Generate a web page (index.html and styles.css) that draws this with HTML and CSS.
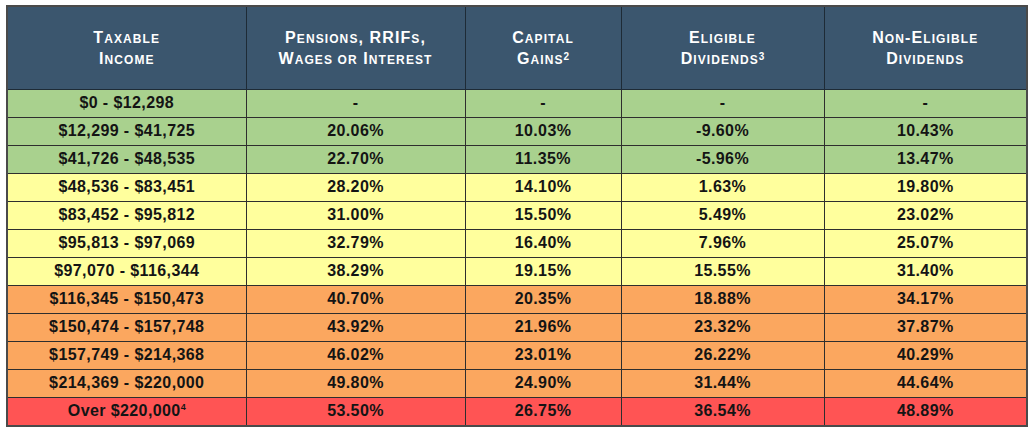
FILE: index.html
```html
<!DOCTYPE html>
<html>
<head>
<meta charset="utf-8">
<link rel="stylesheet" href="styles.css">
</head>
<body>
<table class="rates">
  <colgroup>
    <col class="c1"><col class="c2"><col class="c3"><col class="c4"><col class="c5">
  </colgroup>
  <thead>
    <tr>
      <th>T<span class="sc">axable</span><br>I<span class="sc">ncome</span></th>
      <th>P<span class="sc">ensions</span>, RRIF<span class="sc">s</span>,<br>W<span class="sc">ages or</span> I<span class="sc">nterest</span></th>
      <th>C<span class="sc">apital</span><br>G<span class="sc">ains</span><sup>2</sup></th>
      <th>E<span class="sc">ligible</span><br>D<span class="sc">ividends</span><sup>3</sup></th>
      <th>N<span class="sc">on</span>-E<span class="sc">ligible</span><br>D<span class="sc">ividends</span></th>
    </tr>
  </thead>
  <tbody>
    <tr class="green"><td>$0 - $12,298</td><td>-</td><td>-</td><td>-</td><td>-</td></tr>
    <tr class="green"><td>$12,299 - $41,725</td><td>20.06%</td><td>10.03%</td><td>-9.60%</td><td>10.43%</td></tr>
    <tr class="green"><td>$41,726 - $48,535</td><td>22.70%</td><td>11.35%</td><td>-5.96%</td><td>13.47%</td></tr>
    <tr class="yellow"><td>$48,536 - $83,451</td><td>28.20%</td><td>14.10%</td><td>1.63%</td><td>19.80%</td></tr>
    <tr class="yellow"><td>$83,452 - $95,812</td><td>31.00%</td><td>15.50%</td><td>5.49%</td><td>23.02%</td></tr>
    <tr class="yellow"><td>$95,813 - $97,069</td><td>32.79%</td><td>16.40%</td><td>7.96%</td><td>25.07%</td></tr>
    <tr class="yellow"><td>$97,070 - $116,344</td><td>38.29%</td><td>19.15%</td><td>15.55%</td><td>31.40%</td></tr>
    <tr class="orange"><td>$116,345 - $150,473</td><td>40.70%</td><td>20.35%</td><td>18.88%</td><td>34.17%</td></tr>
    <tr class="orange"><td>$150,474 - $157,748</td><td>43.92%</td><td>21.96%</td><td>23.32%</td><td>37.87%</td></tr>
    <tr class="orange"><td>$157,749 - $214,368</td><td>46.02%</td><td>23.01%</td><td>26.22%</td><td>40.29%</td></tr>
    <tr class="orange"><td>$214,369 - $220,000</td><td>49.80%</td><td>24.90%</td><td>31.44%</td><td>44.64%</td></tr>
    <tr class="red"><td>Over $220,000<sup class="fn">4</sup></td><td>53.50%</td><td>26.75%</td><td>36.54%</td><td>48.89%</td></tr>
  </tbody>
</table>
</body>
</html>
```

FILE: styles.css
```css
html, body {
  margin: 0;
  padding: 0;
  background: #ffffff;
}
body {
  padding: 5px 0 0 6px;
  font-family: "Liberation Sans", Arial, sans-serif;
}
.rates {
  border-collapse: collapse;
  table-layout: fixed;
  width: 1020px;
  border: 2px solid #4a4a4a;
}
.c1 { width: 239px; }
.c2 { width: 219px; }
.c3 { width: 156px; }
.c4 { width: 203px; }
.c5 { width: 203px; }
.rates th {
  background: #3b566e;
  color: #ffffff;
  height: 83px;
  padding: 2px 0 0 0;
  box-sizing: border-box;
  font-size: 16px;
  font-weight: bold;
  line-height: 20px;
  letter-spacing: 1.1px;
  border: 1px solid #1e2b36;
  vertical-align: middle;
  text-align: center;
}
.rates th .sc {
  font-size: 12px;
  text-transform: uppercase;
}
.rates th sup {
  font-size: 10px;
  vertical-align: 4px;
  line-height: 0;
  letter-spacing: 0;
}
.rates td {
  height: 27px;
  padding: 0;
  font-size: 16px;
  font-weight: bold;
  letter-spacing: 0.4px;
  color: #141414;
  text-align: center;
  vertical-align: middle;
  border: 1px solid #2e2e2e;
}
.rates td .fn {
  font-size: 9px;
  vertical-align: 6px;
  line-height: 0;
  letter-spacing: 0;
}
.green td { background: #a9d18e; }
.yellow td { background: #ffff9d; }
.orange td { background: #fba75f; }
.red td { background: #ff5454; }
```
